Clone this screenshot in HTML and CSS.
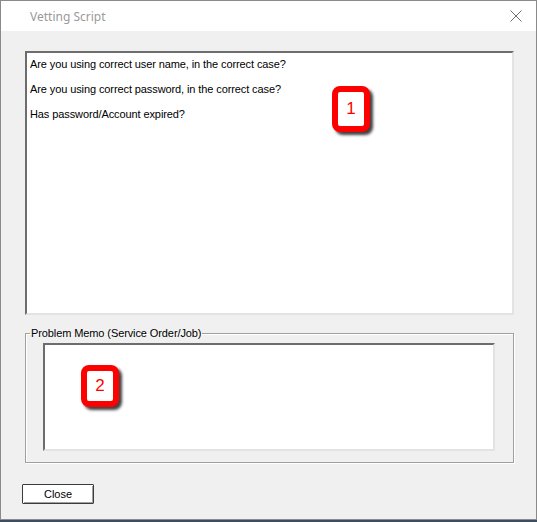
FILE: index.html
```html
<!DOCTYPE html>
<html lang="en">
<head>
	<meta charset="UTF-8">
	<title>Vetting Script</title>
	<link rel="stylesheet" href="styles.css">
</head>
<body>

	<div class="window">
		<div class="titlebar">
			<span class="title">Vetting Script</span>
			<svg class="close-x" width="12" height="12" viewBox="0 0 12 12">
				<path d="M0.5 0.5 L11.5 11.5 M11.5 0.5 L0.5 11.5" stroke="#6f6f6f" stroke-width="1" fill="none"/>
			</svg>
		</div>

		<div class="client">
			<div class="listbox">
				<p>Are you using correct user name, in the correct case?</p>
				<p>Are you using correct password, in the correct case?</p>
				<p>Has password/Account expired?</p>
				<div class="badge badge-1">1</div>
			</div>

			<fieldset class="group">
				<legend>Problem Memo (Service Order/Job)</legend>
				<div class="memo">
					<div class="badge badge-2">2</div>
				</div>
			</fieldset>

			<button class="btn">Close</button>
		</div>
	</div>

</body>
</html>
```

FILE: styles.css
```css
body {
	margin: 0;
	background: #3c4d63;
	font-family: Tahoma, 'DejaVu Sans', sans-serif;
}

.window {
	width: 535px;
	height: 518px;
	border: 1px solid #8a8a8a;
	background: #f0f0f0;
	display: flex;
	flex-direction: column;
}

.titlebar {
	height: 30px;
	background: #ffffff;
	display: flex;
	align-items: center;
	justify-content: space-between;
	padding: 0 14px 0 29px;
}

.title {
	font-family: 'Noto Sans', sans-serif;
	font-size: 12px;
	color: #9a9a9a;
}

.close-x {
	display: block;
}

.client {
	padding: 20px 22px 0 24px;
	display: flex;
	flex-direction: column;
	font-family: 'Liberation Sans', Arial, sans-serif;
	font-size: 11px;
	letter-spacing: -0.1px;
	color: #000;
}

.listbox {
	position: relative;
	height: 260px;
	background: #fff;
	border: 2px solid;
	border-color: #6d6d6d #e3e3e3 #e3e3e3 #6d6d6d;
	padding: 0 3px;
}

.listbox p {
	margin: 5px 0 0;
	height: 20px;
	line-height: 13px;
}

.listbox p:first-child {
	margin-top: 5px;
}

.group {
	margin: 12px 0 0;
	height: 136px;
	box-sizing: border-box;
	border: 1px solid #a0a0a0;
	box-shadow: inset 1px 1px 0 #fff, 1px 1px 0 #fff;
	padding: 4px 18px 10px 17px;
}

.group legend {
	padding: 0 1px;
	margin-left: -13px;
	font-size: 11px;
	color: #000;
}

.memo {
	position: relative;
	height: 104px;
	background: #fff;
	border: 2px solid;
	border-color: #6d6d6d #e3e3e3 #e3e3e3 #6d6d6d;
}

.btn {
	margin: 21px 0 0 -3px;
	width: 72px;
	height: 20px;
	padding: 0;
	font-family: inherit;
	font-size: 11px;
	background: #fff;
	border: 1px solid #3c3c3c;
	box-shadow: inset 1px 1px 0 #fff, inset -1px -1px 0 #a0a0a0;
	border-radius: 1px;
	color: #000;
}

.badge {
	position: absolute;
	width: 26px;
	height: 34px;
	border: 6px solid #ff0000;
	border-radius: 8px;
	background: #fff;
	color: #ff0000;
	font-family: 'Liberation Sans', Arial, sans-serif;
	font-size: 17px;
	display: flex;
	align-items: center;
	justify-content: center;
	box-shadow: 3px 3px 3px rgba(0, 0, 0, 0.75);
}

.badge-1 {
	left: 305px;
	top: 33px;
}

.badge-2 {
	left: 36px;
	top: 20px;
	height: 30px;
}
```
